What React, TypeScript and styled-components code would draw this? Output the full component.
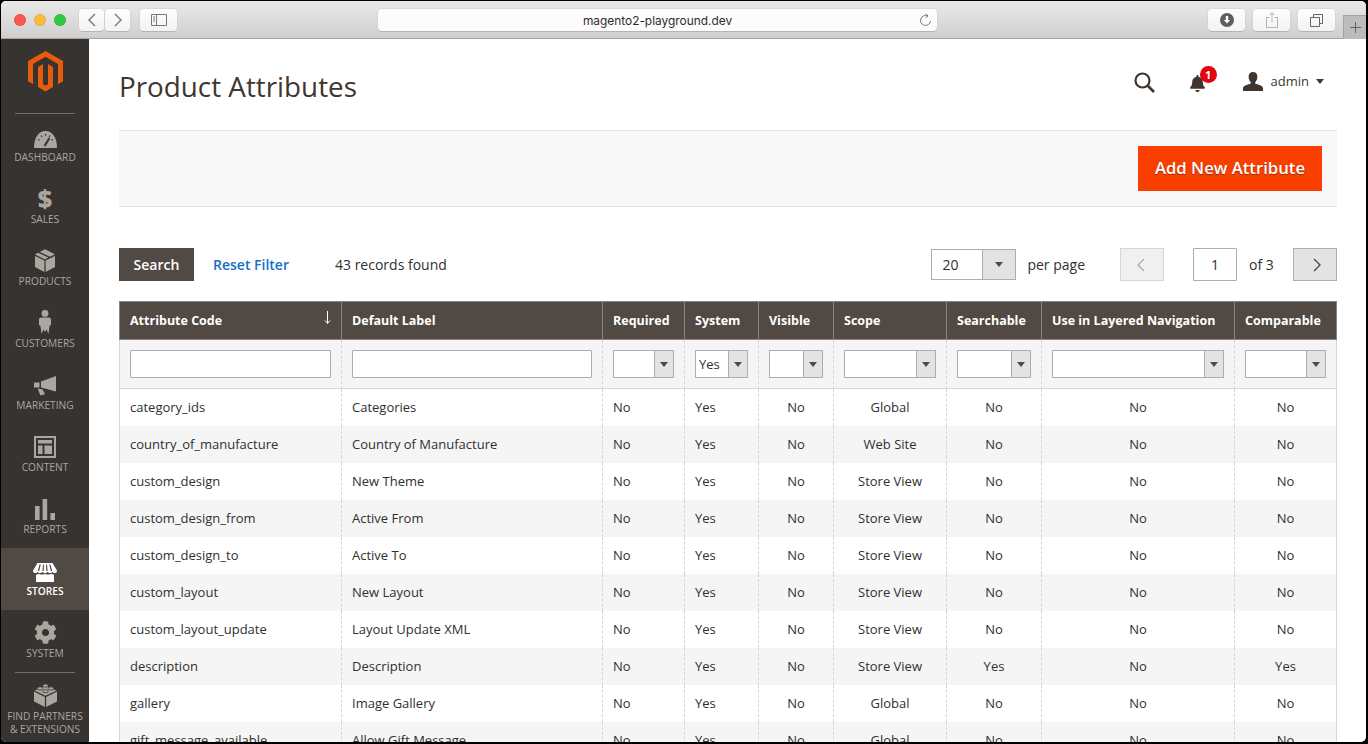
import React from 'react';
import styled, { createGlobalStyle } from 'styled-components';
import { FaCog, FaBell } from 'react-icons/fa';

const GlobalStyle = createGlobalStyle`
    html, body {
        margin: 0;
        padding: 0;
        background: #000;
        overflow: hidden;
    }
    * {
        box-sizing: border-box;
    }
`

const Screen = styled.div`
    width: 1368px;
    height: 744px;
    padding: 1px 2px 2px 1px;
    background: #000;
    font-family: "Open Sans", "Noto Sans", sans-serif;
    font-size: 14px;
    color: #303030;
`
const Win = styled.div`
    display: flex;
    flex-direction: column;
    height: 741px;
    overflow: hidden;
    border-radius: 5px;
    background: #fff;
`
const Chrome = styled.div`
    display: flex;
    align-items: flex-start;
    flex: none;
    height: 38px;
    padding: 8px 0 0 13px;
    background: linear-gradient(#e9e9e9, #cfcfcf);
    border-bottom: 1px solid #a3a3a3;
`
const Light = styled.span<{ $color: string }>`
    flex: none;
    width: 12px;
    height: 12px;
    margin: 5px 8px 0 0;
    border-radius: 50%;
    background: ${p => p.$color};
    border: 1px solid rgba(0, 0, 0, 0.08);
`
const ChromeBtn = styled.div<{ $w: number; $ml?: number }>`
    display: flex;
    align-items: center;
    justify-content: center;
    flex: none;
    width: ${p => p.$w}px;
    height: 22px;
    margin-left: ${p => p.$ml || 0}px;
    background: linear-gradient(#fdfdfd, #f3f3f3);
    border-radius: 4px;
    box-shadow: 0 1px 0 #b4b4b4, 0 0 0 0.5px #cdcdcd;
`
const Address = styled(ChromeBtn)`
    position: relative;
    padding-top: 1px;
    font-family: "Inter", "Liberation Sans", sans-serif;
    font-size: 11.9px;
    color: #2c2c2c;
    background: #fcfcfc;
`
const ReloadIcon = styled.svg`
    position: absolute;
    right: 5px;
    top: 4px;
`
const NewTab = styled.div`
    display: flex;
    align-items: center;
    justify-content: center;
    flex: none;
    width: 23px;
    height: 24px;
    margin: 6px 0 0 8px;
    background: #bcbcbc;
    border-left: 1px solid #a3a3a3;
    border-top: 1px solid #a3a3a3;
`
const Body = styled.div`
    display: flex;
    flex: 1;
    min-height: 0;
`
const Sidebar = styled.nav`
    flex: none;
    width: 88px;
    background: #373330;
`
const LogoBox = styled.div`
    display: flex;
    justify-content: center;
    height: 75px;
    padding-top: 12px;
    margin: 0 14px;
    border-bottom: 1px solid #736e6a;
`
const NavItem = styled.div<{ $active?: boolean }>`
    display: flex;
    flex-direction: column;
    align-items: center;
    height: 62px;
    padding-top: 10px;
    color: ${p => (p.$active ? '#fff' : '#aaa6a0')};
    background: ${p => (p.$active ? '#514943' : 'transparent')};
`
const NavDivider = styled.div`
    height: 1px;
    margin: 0 14px;
    background: #736e6a;
`
const NavGlyph = styled.div`
    display: flex;
    align-items: flex-end;
    justify-content: center;
    height: 24px;
    color: inherit;
`
const Dollar = styled.span`
    font-size: 25px;
    font-weight: 800;
    line-height: 24px;
`
const NavLabel = styled.div<{ $active?: boolean }>`
    margin-top: 3px;
    font-size: 10.2px;
    line-height: 13px;
    text-align: center;
    text-transform: uppercase;
    font-weight: ${p => (p.$active ? 600 : 400)};
    white-space: nowrap;
`
const Main = styled.main`
    flex: 1;
    min-width: 0;
    padding: 0 29px 0 30px;
`
const PageHead = styled.header`
    display: flex;
    align-items: center;
    justify-content: space-between;
    height: 91px;
`
const Title = styled.h1`
    margin: 3px 0 0;
    font-size: 27.8px;
    font-weight: 400;
    color: #41362f;
`
const HeadActions = styled.div`
    display: flex;
    align-items: center;
    padding: 0 13px 6px 0;
    color: #41362f;
`
const SearchIcon = styled.svg`
    margin-top: 2px;
`
const BellWrap = styled.div`
    position: relative;
    display: flex;
    margin: 4px 37px 0 34px;
`
const Badge = styled.span`
    position: absolute;
    left: 11px;
    top: -9px;
    width: 17px;
    height: 17px;
    border-radius: 50%;
    background: #e3020f;
    color: #fff;
    font-size: 11px;
    font-weight: 700;
    line-height: 17px;
    text-align: center;
`
const AdminName = styled.span`
    margin: 0 7px 2px 8px;
    font-size: 13px;
`
const Caret = styled.span`
    width: 0;
    height: 0;
    border-left: 4px solid transparent;
    border-right: 4px solid transparent;
    border-top: 5px solid #41362f;
`
const ActionBar = styled.div`
    display: flex;
    justify-content: flex-end;
    align-items: center;
    height: 77px;
    padding-right: 15px;
    background: #f8f8f8;
    border-top: 1px solid #e3e3e3;
    border-bottom: 1px solid #e3e3e3;
`
const AddButton = styled.button`
    width: 184px;
    height: 45px;
    padding: 0 0 2px;
    border: 0;
    background: #f83f00;
    color: #fff;
    font-family: inherit;
    font-size: 16.7px;
    font-weight: 600;
    text-shadow: 0 1px 1px rgba(0, 0, 0, 0.35);
`
const Toolbar = styled.div`
    display: flex;
    align-items: center;
    height: 33px;
    margin: 41px 0 20px;
`
const SearchButton = styled.button`
    width: 75px;
    height: 33px;
    border: 0;
    background: #514943;
    color: #fff;
    font-family: inherit;
    font-size: 14px;
    font-weight: 600;
`
const ResetLink = styled.a`
    margin-left: 19px;
    color: #1a6fc9;
    font-weight: 600;
`
const Records = styled.span`
    margin-left: 46px;
`
const Pager = styled.div`
    display: flex;
    align-items: center;
    margin-left: auto;
`
const PerPageSelect = styled.div`
    display: flex;
    width: 85px;
    height: 31px;
    border: 1px solid #adadad;
    background: #fff;
`
const PerPageValue = styled.span`
    flex: 1;
    padding-left: 10px;
    line-height: 29px;
`
const ArrowBox = styled.span<{ $w: number }>`
    display: flex;
    align-items: center;
    justify-content: center;
    flex: none;
    width: ${p => p.$w}px;
    background: #e3e3e3;
    border-left: 1px solid #adadad;
`
const ArrowDown = styled.span`
    width: 0;
    height: 0;
    border-left: 4px solid transparent;
    border-right: 4px solid transparent;
    border-top: 5px solid #514943;
`
const PerPageText = styled.span`
    margin: 0 35px 0 11px;
`
const PageBtn = styled.div<{ $disabled?: boolean }>`
    display: flex;
    align-items: center;
    justify-content: center;
    width: 44px;
    height: 33px;
    padding: ${p => (p.$disabled ? '0 2px 0 0' : '0 0 0 3px')};
    background: ${p => (p.$disabled ? '#f0f0f0' : '#e3e3e3')};
    border: 1px solid ${p => (p.$disabled ? '#d6d6d6' : '#adadad')};
`
const PageInput = styled.input`
    width: 44px;
    height: 33px;
    margin-left: 29px;
    border: 1px solid #adadad;
    border-radius: 1px;
    background: #fff;
    color: #303030;
    font-family: inherit;
    font-size: 14px;
    text-align: center;
    outline: none;
`
const OfPages = styled.span`
    width: 56px;
    padding-left: 12px;
`
const Grid = styled.table`
    table-layout: fixed;
    width: 1218px;
    border-collapse: separate;
    border-spacing: 0;
`
const Th = styled.th`
    height: 39px;
    padding: 0 10px 1px;
    background: #514943;
    border-top: 1px solid #8a837f;
    border-bottom: 1px solid #8a837f;
    border-left: 1px solid #8a837f;
    color: #fff;
    font-size: 12.5px;
    font-weight: 700;
    text-align: left;
    white-space: nowrap;
    &:last-child {
        border-right: 1px solid #8a837f;
    }
`
const SortHead = styled.div`
    display: flex;
    justify-content: space-between;
    align-items: center;
`
const SortArrow = styled.svg`
    margin: -5px 0 0;
`
const FilterCell = styled.td`
    height: 49px;
    padding: 0 10px;
    background: #f5f5f5;
    border-left: 1px dashed #d6d6d6;
    border-bottom: 1px solid #d6d6d6;
    &:first-child {
        border-left: 1px solid #d6d6d6;
    }
    &:last-child {
        border-right: 1px solid #d6d6d6;
    }
`
const FilterInput = styled.input`
    display: block;
    width: 100%;
    height: 28px;
    border: 1px solid #adadad;
    border-radius: 1px;
    background: #fff;
    outline: none;
`
const FilterSelect = styled.div`
    display: flex;
    height: 28px;
    border: 1px solid #adadad;
    background: #fff;
`
const FilterValue = styled.span`
    flex: 1;
    padding-left: 3px;
    font-size: 13px;
    line-height: 27px;
`
const Row = styled.tr<{ $odd: boolean }>`
    background: ${p => (p.$odd ? '#f5f5f5' : '#fff')};
`
const Td = styled.td<{ $center?: boolean }>`
    height: 37px;
    padding: 0 10px 2px;
    border-left: 1px dashed #d6d6d6;
    text-align: ${p => (p.$center ? 'center' : 'left')};
    font-size: 13px;
    white-space: nowrap;
    &:first-child {
        border-left: 1px solid #d6d6d6;
    }
    &:last-child {
        border-right: 1px solid #d6d6d6;
    }
`

const colWidths = [222, 261, 82, 74, 75, 113, 95, 193, 103]
const headers = ['Attribute Code', 'Default Label', 'Required', 'System', 'Visible', 'Scope', 'Searchable', 'Use in Layered Navigation', 'Comparable']

const rows = [
    ['category_ids', 'Categories', 'No', 'Yes', 'No', 'Global', 'No', 'No', 'No'],
    ['country_of_manufacture', 'Country of Manufacture', 'No', 'Yes', 'No', 'Web Site', 'No', 'No', 'No'],
    ['custom_design', 'New Theme', 'No', 'Yes', 'No', 'Store View', 'No', 'No', 'No'],
    ['custom_design_from', 'Active From', 'No', 'Yes', 'No', 'Store View', 'No', 'No', 'No'],
    ['custom_design_to', 'Active To', 'No', 'Yes', 'No', 'Store View', 'No', 'No', 'No'],
    ['custom_layout', 'New Layout', 'No', 'Yes', 'No', 'Store View', 'No', 'No', 'No'],
    ['custom_layout_update', 'Layout Update XML', 'No', 'Yes', 'No', 'Store View', 'No', 'No', 'No'],
    ['description', 'Description', 'No', 'Yes', 'No', 'Store View', 'Yes', 'No', 'Yes'],
    ['gallery', 'Image Gallery', 'No', 'Yes', 'No', 'Global', 'No', 'No', 'No'],
    ['gift_message_available', 'Allow Gift Message', 'No', 'Yes', 'No', 'Global', 'No', 'No', 'No'],
]

const Logo = () => (
    <svg width="35" height="41" viewBox="0 0 35 41" fill="#e85a0c">
        <path d="M17.5 0L0 10.1v20.2l5 2.9V13L17.5 5.8 30 13v20.2l5-2.9V10.1z" />
        <path d="M20 33.2l-2.5 1.4-2.5-1.4V13l-5 2.9v20.2l7.5 4.4 7.5-4.4V15.9L20 13z" />
    </svg>
)

const DashboardIcon = () => (
    <svg width="23" height="17" viewBox="0 0 23 17">
        <path fill="currentColor" d="M0 17C0 6 5 0 11.5 0S23 6 23 17z" />
        <g stroke="#373330" strokeWidth="1.2">
            <path d="M4 8.5l1.6.8M7 4.5l1 1.3M11.5 3v1.8M16 4.5l-1 1.3M19 8.5l-1.6.8" />
            <path strokeWidth="2" d="M10.5 15L15.5 7" />
        </g>
    </svg>
)

const ProductsIcon = () => (
    <svg width="20" height="23" viewBox="0 0 20 23" fill="currentColor">
        <path d="M0 7l9.4 4.6V23L0 18z" />
        <path d="M20 7l-9.4 4.6V23L20 18z" />
        <path d="M4.8 3L10 0.2 20 5.2 15 7.8z" />
        <path d="M3.2 3.8L13.4 8.6 10 10.4 0 5.6z" />
    </svg>
)

const CustomersIcon = () => (
    <svg width="12" height="24" viewBox="0 0 12 24" fill="currentColor">
        <circle cx="6" cy="3.4" r="3.4" />
        <path d="M2 7.6h8c1.2 0 2 .9 2 2.2V15l-1.4.8L9.4 24 7.6 19.6 6 22 4.4 19.6 2.6 24 1.4 15.8 0 15V9.8C0 8.5.8 7.6 2 7.6z" />
    </svg>
)

const MarketingIcon = () => (
    <svg width="22" height="20" viewBox="0 0 22 20" fill="currentColor">
        <path d="M7 5.5L22 0v15.5L7 11.5z" />
        <path d="M0 6.5h5.5v5H0z" />
        <path d="M3.6 12.6l5 1 2.4 4.6-4.6 1.4z" />
    </svg>
)

const ContentIcon = () => (
    <svg width="22" height="22" viewBox="0 0 22 22" fill="currentColor">
        <path fillRule="evenodd" d="M0 0h22v22H0zM2 2v18h18V2z" />
        <path d="M4 4h14v3.5H4zM4 9.5h4.5V18H4zM10.5 9.5H18V18h-7.5z" />
    </svg>
)

const ReportsIcon = () => (
    <svg width="20" height="21" viewBox="0 0 20 21" fill="currentColor">
        <path d="M0 7h4.6v14H0zM7.6 0h4.6v21H7.6zM15.4 14H20v7h-4.6z" />
    </svg>
)

const StoresIcon = () => (
    <svg width="24" height="19" viewBox="0 0 24 19" fill="currentColor">
        <path d="M4.5 0h15L24 7.4c0 1.6-1 2.6-2.4 2.6-1 0-1.8-.5-2.2-1.3-.4.8-1.3 1.3-2.4 1.3s-2-.5-2.5-1.3c-.5.8-1.4 1.3-2.5 1.3s-2-.5-2.5-1.3c-.5.8-1.4 1.3-2.5 1.3s-2-.5-2.4-1.3C4.4 9.5 3.4 10 2.4 10 1 10 0 9 0 7.4z" />
        <path fill="#514943" d="M6.6 1.4L4.8 8H6.2L7.8 1.4zM10 1.4L9.4 8h1.3l.3-6.6zM13 1.4l.3 6.6h1.3L14 1.4zM16.2 1.4L17.8 8h1.4l-1.8-6.6z" />
        <path d="M3 11.6c1 0 2-.2 2.8-.8.9.6 2 .8 3.1.8s2-.2 3.1-.8c1 .6 2 .8 3.1.8s2.2-.2 3.1-.8c.8.6 1.8.8 2.8.8V19H3z" />
    </svg>
)

const PartnersIcon = () => (
    <svg width="23" height="24" viewBox="0 0 23 24" fill="currentColor">
        <path d="M0 8.5l10.9 5.4V24L0 18.6z" />
        <path d="M23 8.5l-10.9 5.4V24L23 18.6z" />
        <path d="M11.5 3L22.4 7.6 11.5 12.8.6 7.6z" />
        <g stroke="#373330" strokeWidth="0.8">
            <ellipse cx="11.5" cy="2.6" rx="2.8" ry="1.6" />
            <ellipse cx="6" cy="5.4" rx="2.8" ry="1.6" />
            <ellipse cx="17" cy="5.4" rx="2.8" ry="1.6" />
            <ellipse cx="11.5" cy="8.2" rx="2.8" ry="1.6" />
        </g>
    </svg>
)

const navItems: { label: string; icon: React.ReactNode; active?: boolean }[] = [
    { label: 'Dashboard', icon: <DashboardIcon /> },
    { label: 'Sales', icon: <Dollar>$</Dollar> },
    { label: 'Products', icon: <ProductsIcon /> },
    { label: 'Customers', icon: <CustomersIcon /> },
    { label: 'Marketing', icon: <MarketingIcon /> },
    { label: 'Content', icon: <ContentIcon /> },
    { label: 'Reports', icon: <ReportsIcon /> },
    { label: 'Stores', icon: <StoresIcon />, active: true },
    { label: 'System', icon: <FaCog size={23} /> },
]

const Chevron = ({ left, color }: { left?: boolean; color: string }) => (
    <svg width="10" height="14" viewBox="0 0 10 14" fill="none" stroke={color} strokeWidth="1.4">
        <path d={left ? 'M8 1L2 7l6 6' : 'M2 1l6 6-6 6'} />
    </svg>
)

const filterValues = ['', 'Yes', '', '', '', '', '']

function App() {
    return (
        <Screen>
            <GlobalStyle />
            <Win>
                <Chrome>
                    <Light $color="#fc5753" />
                    <Light $color="#fdbc40" />
                    <Light $color="#33c748" />
                    <ChromeBtn $w={25} $ml={5}><Chevron left color="#777" /></ChromeBtn>
                    <ChromeBtn $w={25} $ml={1}><Chevron color="#777" /></ChromeBtn>
                    <ChromeBtn $w={37} $ml={10}>
                        <svg width="16" height="12" viewBox="0 0 16 12" fill="none" stroke="#777">
                            <path d="M.5.5h15v11H.5zM5.5.5v11" />
                            <path d="M2 3h2M2 5h2M2 7h2" />
                        </svg>
                    </ChromeBtn>
                    <Address $w={559} $ml={201}>
                        magento2-playground.dev
                        <ReloadIcon width="13" height="14" viewBox="0 0 13 14" fill="none" stroke="#777">
                            <path d="M8.6 2.9A5 5 0 1 0 11.5 8" />
                            <path d="M6.6 .8l2.4 2-2.4 2" />
                        </ReloadIcon>
                    </Address>
                    <ChromeBtn $w={37} $ml={271}>
                        <svg width="14" height="14" viewBox="0 0 14 14">
                            <circle cx="7" cy="7" r="7" fill="#5f5f5f" />
                            <path d="M5.8 3h2.4v4h2L7 10.6 3.8 7h2z" fill="#fff" />
                        </svg>
                    </ChromeBtn>
                    <ChromeBtn $w={37} $ml={8}>
                        <svg width="12" height="16" viewBox="0 0 12 16" fill="none" stroke="#b5b5b5">
                            <path d="M3.5 5.5H.5v10h11v-10h-3M6 10V1M3.5 3L6 .8 8.5 3" />
                        </svg>
                    </ChromeBtn>
                    <ChromeBtn $w={37} $ml={8}>
                        <svg width="13" height="13" viewBox="0 0 13 13" fill="none" stroke="#666">
                            <path d="M.5 3.5h9v9h-9zM3.5 3.5v-3h9v9h-3" />
                        </svg>
                    </ChromeBtn>
                    <NewTab>
                        <svg width="11" height="11" viewBox="0 0 11 11" stroke="#666"><path d="M5.5 0v11M0 5.5h11" /></svg>
                    </NewTab>
                </Chrome>
                <Body>
                    <Sidebar>
                        <LogoBox><Logo /></LogoBox>
                        {navItems.map(item => (
                            <NavItem key={item.label} $active={item.active}>
                                <NavGlyph>{item.icon}</NavGlyph>
                                <NavLabel $active={item.active}>{item.label}</NavLabel>
                            </NavItem>
                        ))}
                        <NavDivider />
                        <NavItem>
                            <NavGlyph><PartnersIcon /></NavGlyph>
                            <NavLabel>Find Partners<br />&amp; Extensions</NavLabel>
                        </NavItem>
                    </Sidebar>
                    <Main>
                        <PageHead>
                            <Title>Product Attributes</Title>
                            <HeadActions>
                                <SearchIcon width="21" height="21" viewBox="0 0 21 21" fill="none" stroke="currentColor">
                                    <circle cx="8.5" cy="8.5" r="7" strokeWidth="2.2" />
                                    <path d="M13.5 13.5L20 20" strokeWidth="2.6" />
                                </SearchIcon>
                                <BellWrap>
                                    <FaBell size={17} />
                                    <Badge>1</Badge>
                                </BellWrap>
                                <svg width="20" height="19" viewBox="0 0 20 19" fill="currentColor">
                                    <path d="M10 0c2.8 0 4.4 2 4.4 4.8 0 2.2-1 4.4-2.2 5.4v1.4c2.6 1 7.8 2 7.8 4.6V19H0v-2.800c0-2.600 5.200-3.600 7.800-4.600v-1.400C6.600 9.200 5.600 7 5.600 4.800 5.600 2 7.200 0 10 0z" />
                                </svg>
                                <AdminName>admin</AdminName>
                                <Caret />
                            </HeadActions>
                        </PageHead>
                        <ActionBar>
                            <AddButton>Add New Attribute</AddButton>
                        </ActionBar>
                        <Toolbar>
                            <SearchButton>Search</SearchButton>
                            <ResetLink>Reset Filter</ResetLink>
                            <Records>43 records found</Records>
                            <Pager>
                                <PerPageSelect>
                                    <PerPageValue>20</PerPageValue>
                                    <ArrowBox $w={33}><ArrowDown /></ArrowBox>
                                </PerPageSelect>
                                <PerPageText>per page</PerPageText>
                                <PageBtn $disabled><Chevron left color="#adadad" /></PageBtn>
                                <PageInput defaultValue="1" />
                                <OfPages>of 3</OfPages>
                                <PageBtn><Chevron color="#514943" /></PageBtn>
                            </Pager>
                        </Toolbar>
                        <Grid>
                            <colgroup>
                                {colWidths.map((w, i) => <col key={i} width={w} />)}
                            </colgroup>
                            <thead>
                                <tr>
                                    {headers.map((h, i) => (
                                        <Th key={h}>
                                            {i === 0 ? (
                                                <SortHead>
                                                    {h}
                                                    <SortArrow width="7" height="13" viewBox="0 0 7 13" fill="none" stroke="#fff">
                                                        <path d="M3.5 0v12M1 9.5l2.5 3 2.5-3" />
                                                    </SortArrow>
                                                </SortHead>
                                            ) : h}
                                        </Th>
                                    ))}
                                </tr>
                                <tr>
                                    <FilterCell><FilterInput /></FilterCell>
                                    <FilterCell><FilterInput /></FilterCell>
                                    {filterValues.map((value, i) => (
                                        <FilterCell key={i}>
                                            <FilterSelect>
                                                <FilterValue>{value}</FilterValue>
                                                <ArrowBox $w={19}><ArrowDown /></ArrowBox>
                                            </FilterSelect>
                                        </FilterCell>
                                    ))}
                                </tr>
                            </thead>
                            <tbody>
                                {rows.map((row, r) => (
                                    <Row key={row[0]} $odd={r % 2 === 1}>
                                        {row.map((cell, c) => (
                                            <Td key={c} $center={c > 3}>{cell}</Td>
                                        ))}
                                    </Row>
                                ))}
                            </tbody>
                        </Grid>
                    </Main>
                </Body>
            </Win>
        </Screen>
    );
}

export default App;
